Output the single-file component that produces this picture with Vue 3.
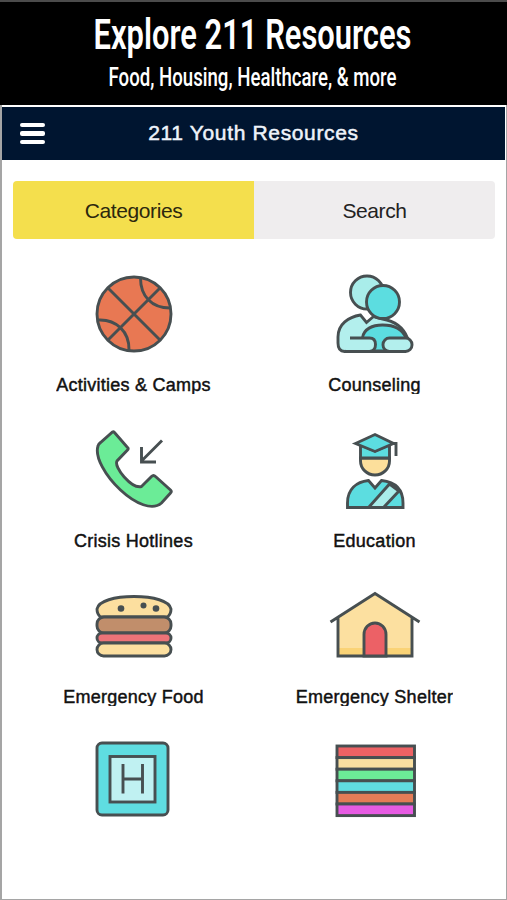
<template>
  <div class="promo">
    <header class="banner">
      <svg class="banner-text" viewBox="0 0 507 103" role="heading">
        <text class="headline" x="93.5" y="47" textLength="318" lengthAdjust="spacingAndGlyphs">Explore 211 Resources</text>
        <text class="tagline" x="108.5" y="83.5" textLength="288" lengthAdjust="spacingAndGlyphs">Food, Housing, Healthcare, &amp; more</text>
      </svg>
    </header>

    <main class="phone">
      <nav class="navbar">
        <button class="menu-btn" aria-label="Menu">
          <span></span>
          <span></span>
          <span></span>
        </button>
        <h1 class="nav-title">211 Youth Resources</h1>
      </nav>

      <div class="tabs">
        <button
          v-for="tab in tabs"
          :key="tab"
          class="tab"
          :class="{ active: tab === activeTab }"
          @click="activeTab = tab"
        >
          {{ tab }}
        </button>
      </div>

      <section class="categories">
        <div class="category">
          <svg class="icon" viewBox="-1.5 0 110 100">
            <circle cx="53.5" cy="49" r="37" fill="#e87853" />
            <path d="M28 23.5 79 74.5M79 23.5 28 74.5M60 13C60 31 71 43 89.5 43M17.5 55C36 54 49 67 48.5 85" />
          </svg>
          <span class="label">Activities &amp; Camps</span>
        </div>

        <div class="category">
          <svg class="icon" viewBox="-0.5 0 110 100">
            <path d="M24 86.5C19 86.5 17.5 83 17.5 78V72C17.5 59 28 52 40 50L46 57.5 53 51.5 62 54C74 56 83 63 87 73Z" fill="#b3efed" />
            <circle cx="46.5" cy="27.5" r="16.5" fill="#a9edea" />
            <circle cx="62.5" cy="37" r="16.5" fill="#5cdde0" />
            <path d="M42 73C43 64 52 60 62 60C73 60 82 64 85.5 73L80 86H49Z" fill="#5cdde0" />
            <path d="M29.5 73H49Q55 73 55 79.5T49 86.5H24" fill="#b3efed" />
            <rect x="62.5" y="73" width="29" height="13.5" rx="6.5" fill="#b3efed" />
            <path d="M24 86.5H85" />
          </svg>
          <span class="label">Counseling</span>
        </div>

        <div class="category">
          <svg class="icon" viewBox="-1.5 1 110 100">
            <path d="M32 12Q33 11.5 34 12.5L47.5 28Q48 29 47 30L36.5 41C33 47 51 69 61 66.5L71 56.5Q73 54.5 75 56.5L90 70Q91.5 71.5 90 73L81 83C72 91 55 84 40 70C25 56 14 37 17.5 26Q18 24 20 22.5Z" fill="#6bec97" />
            <path d="M81.5 20.5 61 41M61 27V42H75.5" />
          </svg>
          <span class="label">Crisis Hotlines</span>
        </div>

        <div class="category">
          <svg class="icon" viewBox="-0.5 1 110 100">
            <path d="M40 38V41A14.5 14 0 0 0 69 41V38Z" fill="#fcdf9b" />
            <path d="M40 25V38H69V25L54.5 31Z" fill="#5cdde0" />
            <path d="M35 23.5 54.5 14.5 73 23.5 54.5 31.5Z" fill="#5cdde0" />
            <path d="M73 23.5H75.5V36" />
            <path d="M27 87.5V83C27 69 36 62 48 60.5L54.5 68 61 60.5C74 62 82.5 69 82.5 83V87.5Z" fill="#5cdde0" />
            <path d="M69 64 78.5 71 63 87.5H48Z" fill="#a9edea" />
          </svg>
          <span class="label">Education</span>
        </div>

        <div class="category">
          <svg class="icon" viewBox="-1.5 -3 110 100">
            <path d="M20 37Q16.5 34 16.5 29C18 21 34 16.5 53.5 16.5S89 21 90.5 29Q90.5 34 87 37Z" fill="#fcdf9f" />
            <rect x="16.5" y="37" width="74" height="16" rx="7" fill="#c18e6b" />
            <rect x="16.5" y="53" width="74" height="10" rx="5" fill="#ec7378" />
            <rect x="16.5" y="63" width="74" height="13" rx="6.5" fill="#fcdf9f" />
            <g class="seeds">
              <circle cx="40.5" cy="28.5" r="3.3" />
              <circle cx="63" cy="25.5" r="3" />
              <circle cx="75.5" cy="28.5" r="3.3" />
            </g>
          </svg>
          <span class="label">Emergency Food</span>
        </div>

        <div class="category">
          <svg class="icon" viewBox="-0.5 -3 110 100">
            <path d="M17.5 37 54.5 13 91.5 37V76H17.5Z" fill="#fce0a0" stroke="none" />
            <path d="M18 68H91V76H18Z" fill="#fad376" stroke="none" />
            <path d="M17.5 38V76H91.5V38M10 42 54.5 13.5 99 42" />
            <path d="M43.5 76V54.5A11 11.5 0 0 1 65.5 54.5V76Z" fill="#ec6166" />
          </svg>
          <span class="label">Emergency Shelter</span>
        </div>

        <div class="category">
          <svg class="icon" viewBox="-1.5 3 110 100">
            <rect x="16.5" y="13" width="71" height="72" rx="5" fill="#5fdde1" />
            <rect x="29.5" y="26.5" width="45" height="45.5" fill="#c0f1f2" />
            <path d="M42.5 34V63.5M62 34V63.5M42.5 49H62" />
          </svg>
        </div>

        <div class="category">
          <svg class="icon" viewBox="-0.5 3 110 100">
            <rect
              v-for="(color, i) in stripes"
              :key="color"
              x="16.5"
              :y="16 + i * 11.6"
              width="77.5"
              height="11.6"
              :fill="color"
            />
          </svg>
        </div>
      </section>
    </main>
  </div>
</template>

<script setup>
import { ref } from 'vue';

const tabs = ['Categories', 'Search'];
const activeTab = ref('Categories');

const stripes = ['#ed6264', '#f9dfa0', '#6ceb97', '#60dce1', '#e57c57', '#e75be3'];
</script>

<style>
body {
  margin: 0;
  background: #fff;
}
</style>

<style scoped>
.promo {
  display: flex;
  flex-direction: column;
  box-sizing: border-box;
  height: 900px;
  border-top: 2px solid #4b4b4b;
  font-family: 'Liberation Sans', Arial, sans-serif;
}

.banner {
  height: 103px;
  background: #000;
}

.banner-text {
  display: block;
  width: 100%;
  height: 103px;
  overflow: visible;
  fill: #fff;
  font-family: Roboto, sans-serif;
}

.headline {
  font-size: 42.5px;
  font-weight: 600;
}

.tagline {
  font-size: 25px;
  font-weight: 500;
}

.phone {
  flex: 1;
  box-sizing: border-box;
  padding-top: 2px;
  border: solid #a5a5a5;
  border-width: 0 1px 1px 2px;
}

.navbar {
  display: grid;
  grid-template-columns: 60px 1fr 60px;
  align-items: center;
  height: 53px;
  margin-right: 1px;
  background: #001530;
}

.menu-btn {
  display: flex;
  flex-direction: column;
  gap: 4px;
  width: 25px;
  margin-left: 18px;
  padding: 0;
  border: none;
  background: none;
  cursor: pointer;
}

.menu-btn span {
  height: 4.3px;
  border-radius: 2px;
  background: #fff;
}

.nav-title {
  margin: 0;
  padding-bottom: 2px;
  color: #eef3fa;
  font-size: 21px;
  font-weight: 400;
  letter-spacing: 0.65px;
  text-align: center;
  -webkit-text-stroke: 0.5px #eef3fa;
}

.tabs {
  display: flex;
  height: 58px;
  margin: 21px 11px 0;
  border-radius: 4px;
  overflow: hidden;
}

.tab {
  flex: 1;
  padding: 2px 0 0;
  border: none;
  background: #efedee;
  color: #222;
  font-family: inherit;
  font-size: 21px;
  letter-spacing: -0.4px;
  cursor: pointer;
}

.tab.active {
  background: #f4df4d;
  color: #2c280e;
}

.categories {
  display: grid;
  grid-template-columns: 1fr 1fr;
  grid-auto-rows: 156px;
  height: 634px;
  margin: 26px 11px 0;
  overflow: hidden;
}

.category {
  display: flex;
  flex-direction: column;
  align-items: center;
}

.icon {
  flex: none;
  width: 110px;
  height: 100px;
  fill: none;
  stroke: #474f51;
  stroke-width: 2.9;
}

.seeds {
  fill: #474f51;
  stroke: none;
}

.label {
  height: 19px;
  margin-top: 10px;
  overflow: hidden;
  color: #111;
  font-size: 18px;
  letter-spacing: 0.25px;
  line-height: 21px;
  white-space: nowrap;
  -webkit-text-stroke: 0.45px #111;
}
</style>
